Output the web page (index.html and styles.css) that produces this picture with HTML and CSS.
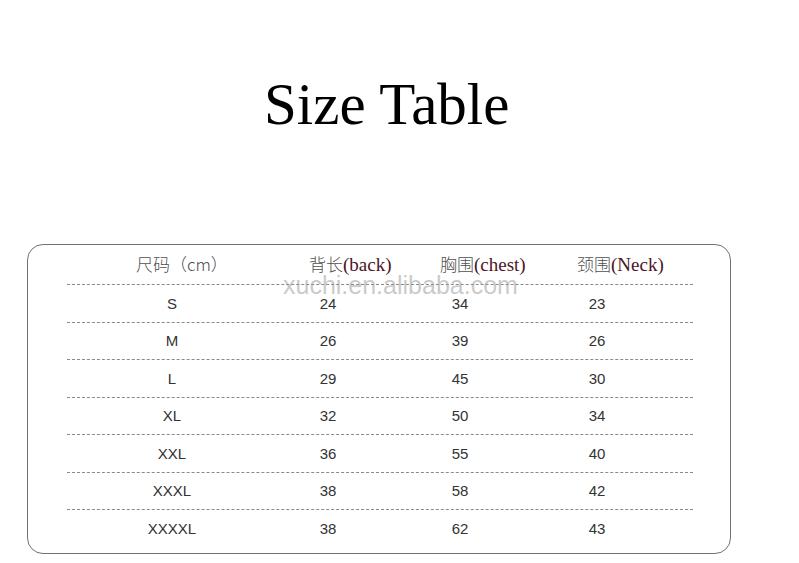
FILE: index.html
```html
<!DOCTYPE html>
<html>
<head>
<meta charset="utf-8">
<link rel="stylesheet" href="styles.css">
</head>
<body>
<div class="page">
  <h1 class="title">Size Table</h1>
  <div class="card">
    <div class="head">
      <span class="h1c">尺码（cm）</span>
      <span class="h2c">背长<em>(back)</em></span>
      <span class="h3c">胸围<em>(chest)</em></span>
      <span class="h4c">颈围<em>(Neck)</em></span>
    </div>
    <div class="row"><span>S</span><span>24</span><span>34</span><span>23</span></div>
    <div class="row"><span>M</span><span>26</span><span>39</span><span>26</span></div>
    <div class="row"><span>L</span><span>29</span><span>45</span><span>30</span></div>
    <div class="row"><span>XL</span><span>32</span><span>50</span><span>34</span></div>
    <div class="row"><span>XXL</span><span>36</span><span>55</span><span>40</span></div>
    <div class="row"><span>XXXL</span><span>38</span><span>58</span><span>42</span></div>
    <div class="row last"><span>XXXXL</span><span>38</span><span>62</span><span>43</span></div>
    <div class="watermark">xuchi.en.alibaba.com</div>
  </div>
</div>
</body>
</html>
```
FILE: styles.css
```css
html, body {
  margin: 0;
  padding: 0;
  background: #ffffff;
}
.page {
  width: 799px;
  height: 563px;
  padding-top: 71px;
  box-sizing: border-box;
}
.title {
  margin: 0;
  padding-left: 264px;
  font-family: "Liberation Serif", "Times New Roman", serif;
  font-weight: normal;
  font-size: 59px;
  line-height: 66px;
  color: #000;
}
.card {
  position: relative;
  margin-top: 107px;
  margin-left: 27px;
  width: 704px;
  height: 310px;
  box-sizing: border-box;
  border: 1.5px solid #727272;
  border-radius: 16px;
  padding: 0 37px 0 39px;
}
.head {
  display: grid;
  grid-template-columns: 173px 131px 137px 1fr;
  padding-left: 69px;
  height: 39px;
  align-items: center;
  font-family: "Noto Sans CJK SC", "Liberation Sans", sans-serif;
  font-size: 17px;
  line-height: 18px;
  font-weight: 300;
  color: #4f4f4f;
  border-bottom: 1px dashed #8a8a8a;
}
.head span {
  padding-bottom: 1px;
}
.head em {
  font-style: normal;
  font-family: "Liberation Serif", "Times New Roman", serif;
  font-size: 19px;
  color: #4d1525;
}
.row {
  display: grid;
  grid-template-columns: 210px 102px 162px 112px;
  height: 36.5px;
  align-items: center;
  justify-items: center;
  font-family: "Liberation Sans", Arial, sans-serif;
  font-size: 15px;
  line-height: 15px;
  color: #333;
  border-bottom: 1px dashed #8a8a8a;
}
.row.last {
  border-bottom: none;
}
.watermark {
  position: absolute;
  left: 255px;
  top: 30px;
  font-family: "Liberation Sans", Arial, sans-serif;
  font-size: 25px;
  line-height: 20px;
  color: rgba(150, 150, 150, 0.5);
}
```
